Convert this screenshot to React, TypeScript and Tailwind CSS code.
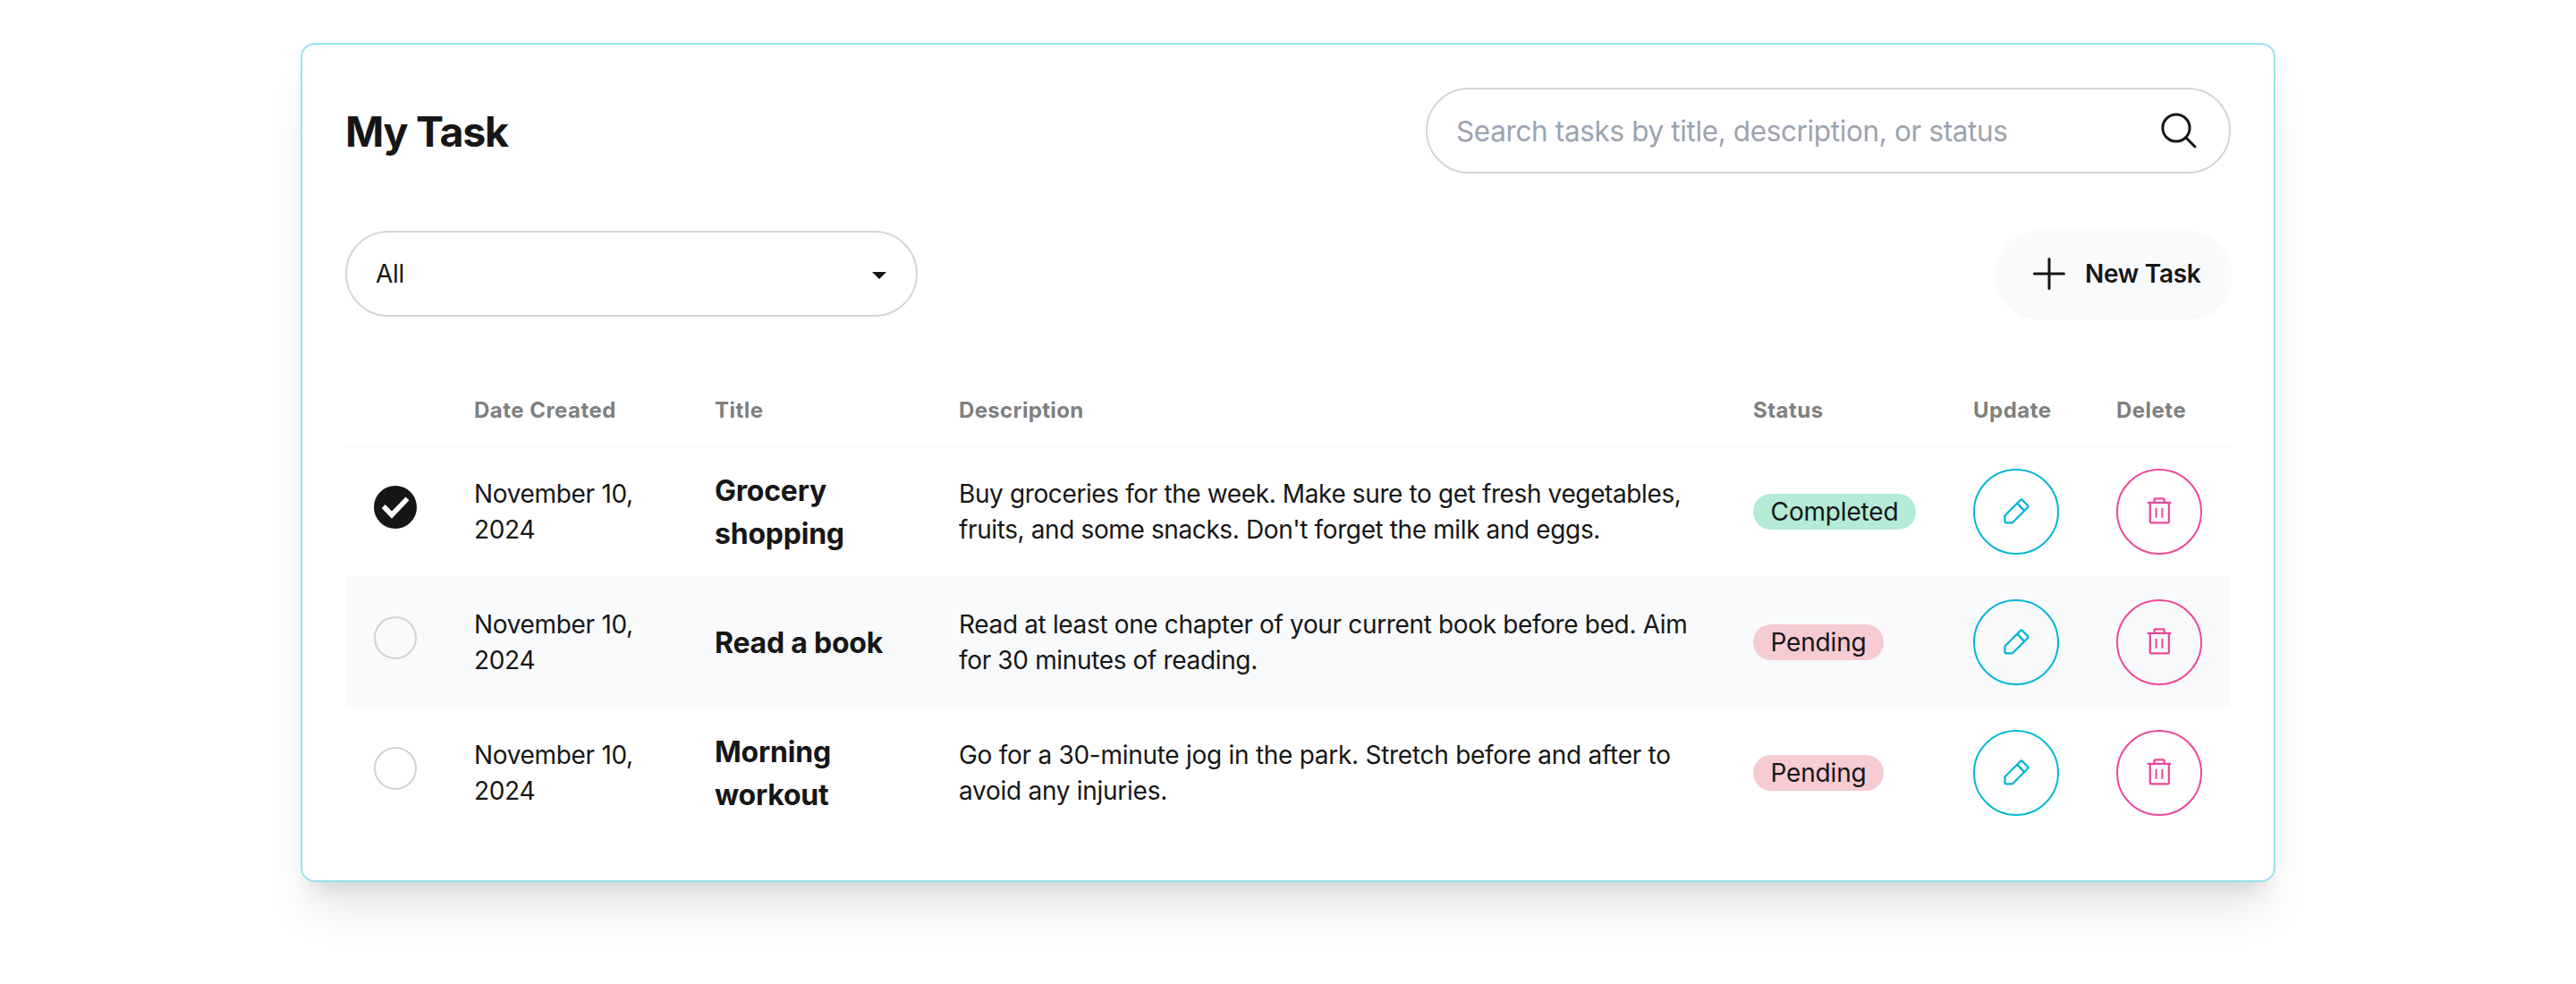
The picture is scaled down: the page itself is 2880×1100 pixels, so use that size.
type Task = {
  done: boolean;
  date: string;
  title: string[];
  description: string[];
  status: "Completed" | "Pending";
  tracking: string;
};

const tasks: Task[] = [
  {
    done: true,
    date: "November 10, 2024",
    title: ["Grocery", "shopping"],
    description: [
      "Buy groceries for the week. Make sure to get fresh vegetables,",
      "fruits, and some snacks. Don't forget the milk and eggs.",
    ],
    status: "Completed",
    tracking: "tracking-[-0.385px]",
  },
  {
    done: false,
    date: "November 10, 2024",
    title: ["Read a book"],
    description: ["Read at least one chapter of your current book before bed. Aim", "for 30 minutes of reading."],
    status: "Pending",
    tracking: "tracking-[-0.35px]",
  },
  {
    done: false,
    date: "November 10, 2024",
    title: ["Morning", "workout"],
    description: ["Go for a 30-minute jog in the park. Stretch before and after to", "avoid any injuries."],
    status: "Pending",
    tracking: "tracking-[-0.275px]",
  },
];

const columns = "grid grid-cols-[112px_269px_273px_888px_246px_160px_160px]";

function SearchIcon() {
  return (
    <svg className="size-12" viewBox="0 0 48 48" fill="none" stroke="currentColor" strokeWidth="3" strokeLinecap="round">
      <circle cx="21" cy="21" r="15.1" />
      <path d="M31.8 31.8 42 42" />
    </svg>
  );
}

function PlusIcon() {
  return (
    <svg className="size-12" viewBox="0 0 48 48" fill="none" stroke="currentColor" strokeWidth="3" strokeLinecap="round">
      <path d="M25 7.5v33M8.5 24h33" />
    </svg>
  );
}

function PencilIcon() {
  return (
    <svg className="size-8" viewBox="0 0 32 32" fill="none" stroke="currentColor" strokeWidth="2.3" strokeLinejoin="round">
      <path d="M3.5 20.3 20.6 3.2Q21.9 1.9 23.2 3.2L28.6 8.6Q30.2 10.2 28.6 11.8L12 28.3H4.5Q3.5 28.3 3.5 27.3Z" />
      <path d="m17.4 6.6 7.4 8" />
    </svg>
  );
}

function TrashIcon() {
  return (
    <svg className="size-8" viewBox="0 0 32 32" fill="none" stroke="currentColor" strokeWidth="2.3" strokeLinejoin="round">
      <path d="M2.7 5.8h26.6M10.6 5.8V2.6Q10.6 1.4 11.8 1.4H20.5Q21.7 1.4 21.7 2.6V5.8" />
      <path d="M5.8 5.8V27.2Q5.8 28.3 6.9 28.3H25.8Q26.9 28.3 26.9 27.2V5.8" />
      <path d="M12.6 11.7v11M19.4 11.7v11" strokeWidth="2" />
    </svg>
  );
}

function Check({ done }: { done: boolean }) {
  if (!done) return <span className="block size-12 rounded-full border-2 border-[#d2d2d3]" />;
  return (
    <span className="block size-12 rounded-full bg-[#161616]">
      <svg className="size-12" viewBox="0 0 48 48" fill="#fff">
        <path d="M8.7 25 12.7 21 20 28.6 35.5 12.4 39.4 16.3 20 36.8Z" />
      </svg>
    </span>
  );
}

function Row({ task, striped }: { task: Task; striped: boolean }) {
  return (
    <div
      className={`${columns} items-center border-[#f8fafc] ${
        striped ? "h-[146px] border-b-2 bg-[#f8fafc]" : "h-[146px] border-b-2 last:h-36 last:border-0"
      }`}
    >
      <div className="px-8 pb-2.5">
        <Check done={task.done} />
      </div>
      <div className="w-[245px] pl-8 tracking-[-0.32px]">{task.date}</div>
      <div className="pt-0.5 pl-8 text-[32px] leading-[48px] font-bold tracking-[-0.22px]">
        {task.title.map((line) => (
          <div key={line}>{line}</div>
        ))}
      </div>
      <div className={`pl-8 whitespace-nowrap ${task.tracking}`}>
        {task.description.map((line) => (
          <div key={line}>{line}</div>
        ))}
      </div>
      <div className="flex pl-8">
        <span
          className={`flex h-10 items-center justify-center rounded-full tracking-[-0.18px] ${
            task.status === "Completed" ? "w-[182px] bg-[#b4ebd6]" : "w-[146px] bg-[#f6cbd2]"
          }`}
        >
          {task.status}
        </span>
      </div>
      <div className="pl-8">
        <button className="flex size-24 items-center justify-center rounded-full border-2 border-[#06b6d4] text-[#06b6d4]">
          <PencilIcon />
        </button>
      </div>
      <div className="pl-8">
        <button className="flex size-24 items-center justify-center rounded-full border-2 border-[#ec4899] text-[#ec4899]">
          <TrashIcon />
        </button>
      </div>
    </div>
  );
}

export default function App() {
  return (
    <div className="h-[1100px] w-[2880px] overflow-hidden bg-white pt-12 font-['Inter',sans-serif] text-[28px] leading-10 text-[#161616]">
      <main className="mx-auto h-[938px] w-[2208px] rounded-2xl border-2 border-[#97e3ec] bg-white p-12 shadow-[0_40px_50px_-10px_rgba(0,0,0,0.1),0_16px_20px_-12px_rgba(0,0,0,0.1)]">
        <header className="flex items-center justify-between">
          <h1 className="pt-0.5 text-[46.5px] leading-[64px] font-bold tracking-[-1.25px]">My Task</h1>
          <div className="flex h-24 w-[900px] items-center justify-between rounded-full border-2 border-[#d5d5d5] px-8">
            <span className="pt-0.5 text-[31.5px] tracking-[-0.37px] text-[#9ca3af]">
              Search tasks by title, description, or status
            </span>
            <SearchIcon />
          </div>
        </header>

        <div className="mt-16 flex items-center justify-between">
          <div className="flex h-24 w-[640px] items-center justify-between rounded-full border-2 border-[#d5d5d5] px-8">
            <span className="tracking-[-0.3px]">All</span>
            <svg className="mt-1 mr-px h-2 w-4" viewBox="0 0 16 8" fill="currentColor">
              <path d="M0 0h16L8 8z" />
            </svg>
          </div>
          <button className="flex h-24 w-[262px] items-center gap-[17px] rounded-full bg-[#f8fafc] pl-[34px] font-semibold tracking-[-0.3px] whitespace-nowrap shadow-[0_2px_4px_0_rgba(0,0,0,0.05)]">
            <PlusIcon />
            New Task
          </button>
        </div>

        <section className="mt-16">
          <div
            className={`${columns} h-[82px] items-center border-b-2 border-[#f8fafc] pt-0.5 text-2xl leading-8 font-bold tracking-[0.48px] text-[#7f7f7f]`}
          >
            <span />
            <span className="pl-8">Date Created</span>
            <span className="pl-8">Title</span>
            <span className="pl-8 tracking-[0.35px]">Description</span>
            <span className="pl-8">Status</span>
            <span className="pl-8">Update</span>
            <span className="pl-8">Delete</span>
          </div>
          {tasks.map((task, i) => (
            <Row key={task.title[0]} task={task} striped={i % 2 === 1} />
          ))}
        </section>
      </main>
    </div>
  );
}
